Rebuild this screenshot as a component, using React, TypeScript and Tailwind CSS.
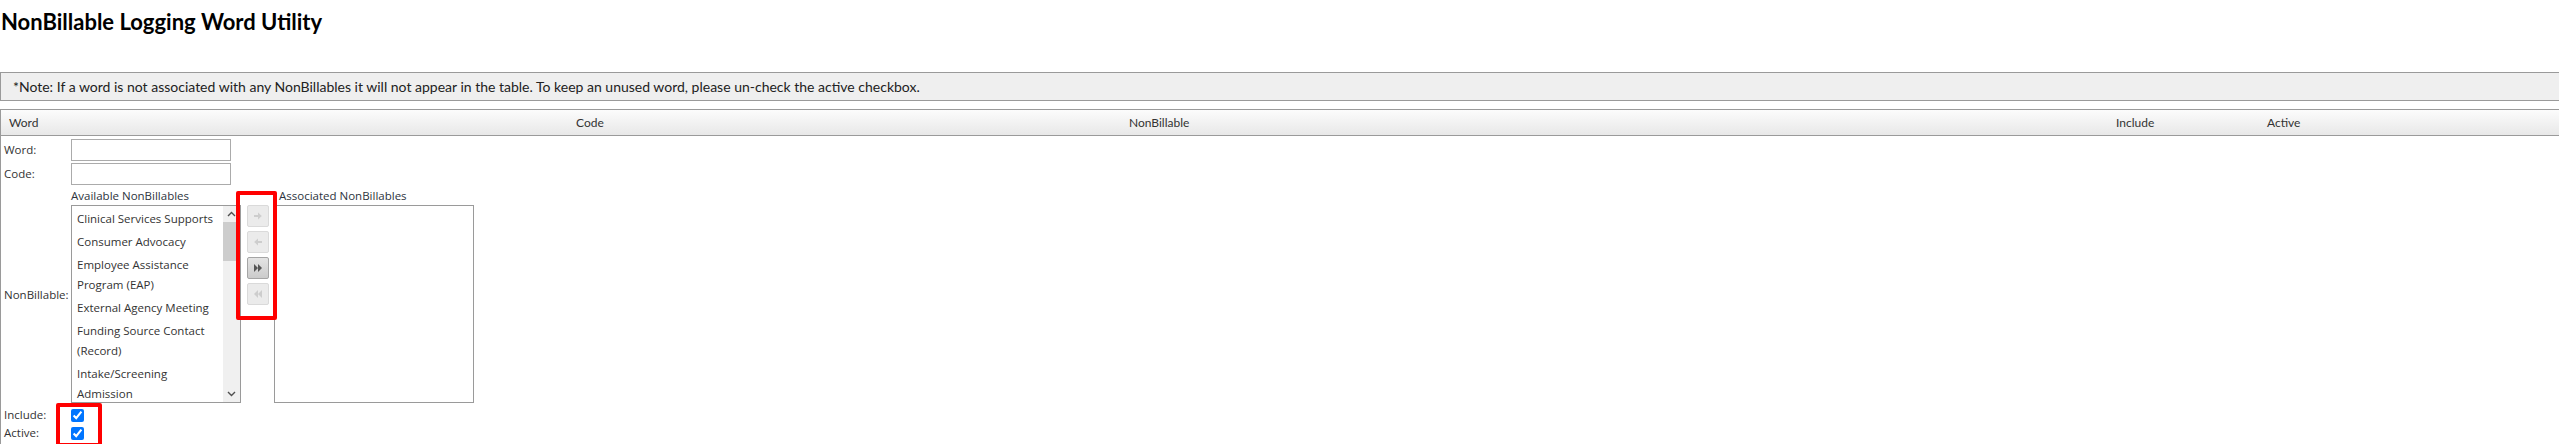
import React from 'react';

const available: string[][] = [
  ['Clinical Services Supports'],
  ['Consumer Advocacy'],
  ['Employee Assistance', 'Program (EAP)'],
  ['External Agency Meeting'],
  ['Funding Source Contact', '(Record)'],
  ['Intake/Screening', 'Admission'],
  ['Medical Appointment'],
  ['Staff Meeting'],
  ['Training'],
  ['Travel Time'],
];

function ArrowIcon({ dir }: { dir: 'right' | 'left' }) {
  return (
    <svg width="10" height="10" viewBox="0 0 10 10" className={dir === 'left' ? 'rotate-180' : ''}>
      <path d="M1 5h5" stroke="currentColor" strokeWidth="2" />
      <path d="M5 1.5 8.8 5 5 8.5z" fill="currentColor" />
    </svg>
  );
}

function DoubleIcon({ dir }: { dir: 'right' | 'left' }) {
  return (
    <svg width="10" height="10" viewBox="0 0 10 10" className={dir === 'left' ? 'rotate-180' : ''}>
      <path d="M1 1 5 5 1 9z M5 1 9 5 5 9z" fill="currentColor" />
    </svg>
  );
}

function MoveButton({ enabled, children }: { enabled?: boolean; children: React.ReactNode }) {
  return (
    <button
      type="button"
      className={`w-[22px] h-[22px] flex items-center justify-center rounded-[2px] border ${
        enabled
          ? 'bg-gradient-to-b from-[#e4e4e4] to-[#cbcbcb] border-[#a5a5a5] text-[#555]'
          : 'bg-[#ebebeb] border-[#dadada] text-[#cdcdcd]'
      }`}
    >
      {children}
    </button>
  );
}

export default function App() {
  return (
    <div className="relative w-[2559px] h-[444px] overflow-hidden bg-white text-[#333] font-['Lato',sans-serif]">
      {/* Title */}
      <h1 className="pt-[10px] pl-[1px] text-[22px] leading-[24px] font-bold text-black">
        NonBillable Logging Word Utility
      </h1>

      {/* Note */}
      <div className="mt-[38px] w-[2570px] h-[29px] flex items-center pl-[12px] border border-[#9a9a9a] bg-[#efefef] text-[14px] text-[#222]">
        *Note: If a word is not associated with any NonBillables it will not appear in the table. To keep an unused word, please un-check the active checkbox.
      </div>

      {/* Table header */}
      <div className="mt-[8px] w-[2570px] h-[27px] grid grid-cols-[567px_553px_987px_151px_1fr] items-center border border-[#9a9a9a] bg-gradient-to-b from-[#fcfcfc] to-[#e8e8e8] text-[12px] text-[#333]">
        <span className="pl-[8px]">Word</span>
        <span className="pl-[8px]">Code</span>
        <span className="pl-[8px]">NonBillable</span>
        <span className="pl-[8px]">Include</span>
        <span className="pl-[8px]">Active</span>
      </div>

      {/* Edit row */}
      <div className="border-l border-[#9a9a9a] pt-[3px] h-[400px] text-[11.5px] font-['Open_Sans',sans-serif]">
        <div className="grid grid-cols-[70px_1fr] gap-y-[2px]">
          <label className="pl-[3px] self-center">Word:</label>
          <input className="w-[160px] h-[22px] border border-[#ababab] bg-white outline-none" />

          <label className="pl-[3px] self-center">Code:</label>
          <input className="w-[160px] h-[22px] border border-[#ababab] bg-white outline-none" />

          <label className="pl-[3px] self-center whitespace-nowrap">NonBillable:</label>
          <div className="flex">
            <div className="w-[170px]">
              <div className="h-[18px] leading-[18px] whitespace-nowrap text-[#2d3440]">Available NonBillables</div>
              <div className="h-[198px] flex border border-[#9a9a9a] bg-white overflow-hidden">
                <div className="flex-1 pt-[1.5px] overflow-hidden">
                  {available.map((lines) => (
                    <div key={lines.join(' ')} className="py-[1.5px] pl-[5px] leading-[20px] whitespace-nowrap text-[#333]">
                      {lines.map((l) => (
                        <div key={l}>{l}</div>
                      ))}
                    </div>
                  ))}
                </div>
                <div className="w-[17px] flex flex-col bg-[#f0f0f0]">
                  <div className="h-[16px] flex items-center justify-center text-[#505050]">
                    <svg width="9" height="6" viewBox="0 0 9 6">
                      <path d="M1 5 4.5 1.5 8 5" stroke="currentColor" strokeWidth="1.4" fill="none" />
                    </svg>
                  </div>
                  <div className="h-[39px] bg-[#cdcdcd]" />
                  <div className="flex-1" />
                  <div className="h-[16px] flex items-center justify-center text-[#505050]">
                    <svg width="9" height="6" viewBox="0 0 9 6">
                      <path d="M1 1 4.5 4.5 8 1" stroke="currentColor" strokeWidth="1.4" fill="none" />
                    </svg>
                  </div>
                </div>
              </div>
            </div>

            <div className="ml-[6px] pt-[18px] flex flex-col gap-[4px]">
              <MoveButton><ArrowIcon dir="right" /></MoveButton>
              <MoveButton><ArrowIcon dir="left" /></MoveButton>
              <MoveButton enabled><DoubleIcon dir="right" /></MoveButton>
              <MoveButton><DoubleIcon dir="left" /></MoveButton>
            </div>

            <div className="ml-[5px] w-[200px]">
              <div className="h-[18px] leading-[18px] pl-[5px] whitespace-nowrap text-[#2d3440]">Associated NonBillables</div>
              <div className="h-[198px] border border-[#9a9a9a] bg-white" />
            </div>
          </div>

          <label className="pl-[3px] h-[18px] leading-[18px] mt-[1px]">Include:</label>
          <div className="h-[18px] flex items-center mt-[1px]">
            <input type="checkbox" defaultChecked className="w-[13px] h-[13px] m-0 accent-[#0075ff]" />
          </div>

          <label className="pl-[3px] h-[18px] leading-[18px] -mt-[2px]">Active:</label>
          <div className="h-[18px] flex items-center -mt-[2px]">
            <input type="checkbox" defaultChecked className="w-[13px] h-[13px] m-0 accent-[#0075ff]" />
          </div>
        </div>
      </div>

      {/* Highlight annotations */}
      <div className="absolute left-[236px] top-[191px] w-[41px] h-[129px] border-[4px] border-[#ff0000] rounded-[2px] pointer-events-none" />
      <div className="absolute left-[56px] top-[403px] w-[46px] h-[44px] border-[4px] border-[#ff0000] rounded-[2px] pointer-events-none" />
    </div>
  );
}
